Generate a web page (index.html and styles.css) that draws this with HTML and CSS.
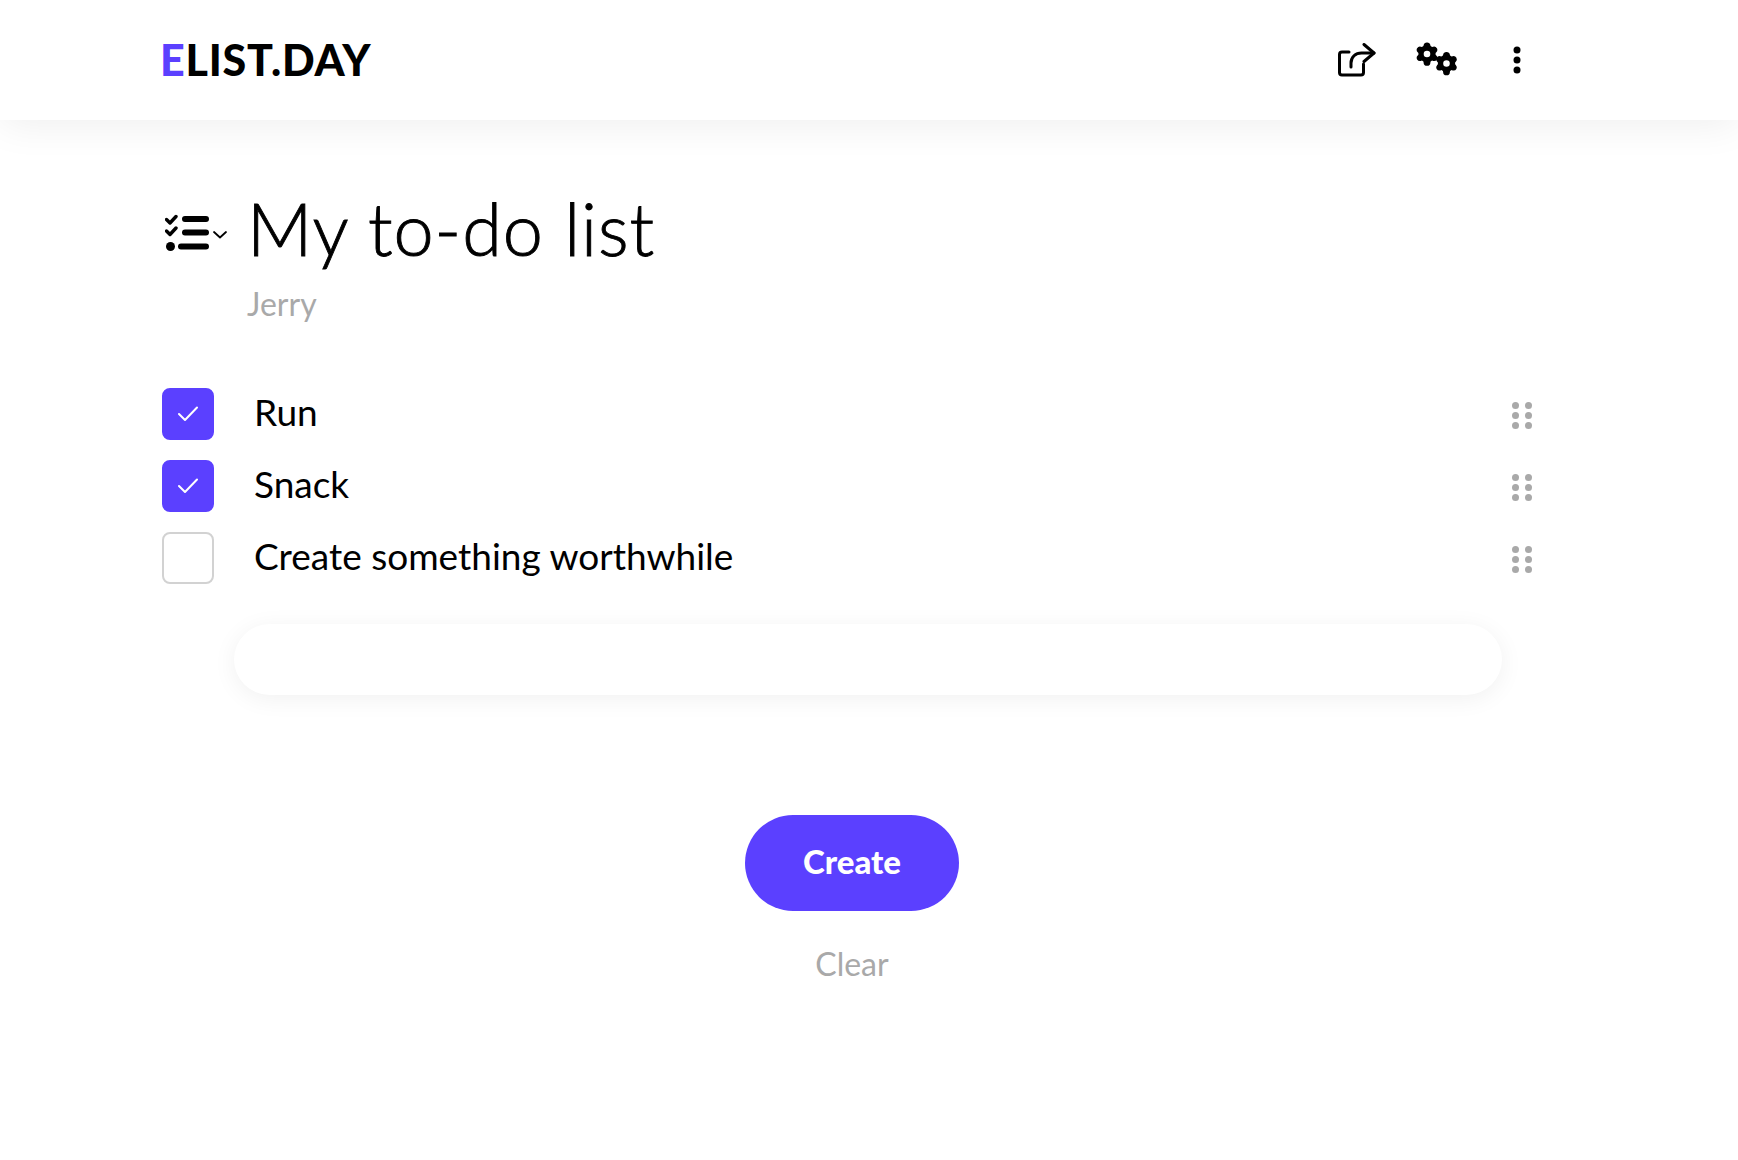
FILE: index.html
```html
<!DOCTYPE html>
<html lang="en">
<head>
<meta charset="utf-8">
<title>Elist.day</title>
<link rel="stylesheet" href="styles.css">
</head>
<body>
<header class="topbar">
  <div class="logo"><span class="logo-e">E</span>LIST.DAY</div>
  <nav class="actions">
    <svg class="icon-share" viewBox="0 0 38 34" width="38" height="34" fill="none" stroke="#000" stroke-width="3" stroke-linecap="round" stroke-linejoin="round">
      <path d="M11 9H4a2.500 2.500 0 0 0-2.500 2.500v18A2.500 2.500 0 0 0 4 32h19a2.500 2.500 0 0 0 2.500-2.500V21"/>
      <path d="M13 24v-4c0-6 4.500-10 10.500-10H36"/>
      <path d="M26 1.500L36 10l-10 8.500"/>
    </svg>
    <svg class="icon-gears" viewBox="0 0 42 34" width="42" height="34">
      <path fill-rule="evenodd" d="M11 0.500a3.400 3.400 0 0 1 3.400 2.700 l.2 .9 1.500 .9 1-.3 a3.400 3.400 0 0 1 3.800 1.500 3.400 3.400 0 0 1-.6 4 l-.7 .7 v1.800 l.7 .7 a3.400 3.400 0 0 1 .6 4 3.400 3.400 0 0 1-3.800 1.500 l-1-.3-1.500 .9-.2 .9 a3.400 3.400 0 0 1-6.800 0 l-.2-.9-1.500-.9-1 .3 a3.400 3.400 0 0 1-3.800-1.500 3.400 3.400 0 0 1 .6-4 l.7-.7 v-1.800 l-.7-.7 a3.400 3.400 0 0 1-.6-4 3.400 3.400 0 0 1 3.800-1.500 l1 .3 1.500-.9 .2-.9 a3.400 3.400 0 0 1 3.400-2.700z M11 8.700a3.300 3.300 0 1 0 0 6.600 3.300 3.300 0 0 0 0-6.600z"/>
      <path fill-rule="evenodd" d="M30.500 10a3.400 3.400 0 0 1 3.400 2.700 l.2 .9 1.500 .9 1-.3 a3.400 3.400 0 0 1 3.800 1.500 3.400 3.400 0 0 1-.6 4 l-.7 .7 v1.800 l.7 .7 a3.400 3.400 0 0 1 .6 4 3.400 3.400 0 0 1-3.800 1.500 l-1-.3-1.500 .9-.2 .9 a3.400 3.400 0 0 1-6.800 0 l-.2-.9-1.500-.9-1 .3 a3.400 3.400 0 0 1-3.800-1.500 3.400 3.400 0 0 1 .6-4 l.7-.7 v-1.800 l-.7-.7 a3.400 3.400 0 0 1-.6-4 3.400 3.400 0 0 1 3.800-1.500 l1 .3 1.500-.9 .2-.9 a3.400 3.400 0 0 1 3.400-2.700z M30.500 18.200a3.300 3.300 0 1 0 0 6.600 3.300 3.300 0 0 0 0-6.600z"/>
    </svg>
    <svg class="icon-more" viewBox="0 0 8 28" width="8" height="28" fill="#000">
      <circle cx="4" cy="4" r="3.500"/><circle cx="4" cy="14" r="3.500"/><circle cx="4" cy="24" r="3.500"/>
    </svg>
  </nav>
</header>

<main class="page">
  <section class="title-block">
    <div class="title-row">
      <svg class="icon-list" viewBox="0 0 66 38" width="66" height="38" fill="none" stroke="#000" stroke-linecap="round" stroke-linejoin="round">
        <path d="M1.500 5.500l3.500 3.500 6-6.500M1.500 17l3.500 3.500 6-6.500" stroke-width="3.400"/>
        <circle cx="5.500" cy="32.500" r="4.500" fill="#000" stroke="none"/>
        <path d="M20 5h21M20 18.500h21M16 32.500h25" stroke-width="6"/>
        <path d="M49 18l6 5.500 6-5.500" stroke-width="1.800"/>
      </svg>
      <h1 class="title">My to-do list</h1>
    </div>
    <p class="author">Jerry</p>
  </section>

  <ul class="todo-list">
    <li class="todo">
      <span class="check check-on"><svg viewBox="0 0 20 16" width="20" height="16" fill="none" stroke="#fff" stroke-width="2" stroke-linecap="round" stroke-linejoin="round"><path d="M1 8l6 6L19 1.500"/></svg></span>
      <span class="todo-text">Run</span>
      <span class="grip"><i></i><i></i><i></i><i></i><i></i><i></i></span>
    </li>
    <li class="todo">
      <span class="check check-on"><svg viewBox="0 0 20 16" width="20" height="16" fill="none" stroke="#fff" stroke-width="2" stroke-linecap="round" stroke-linejoin="round"><path d="M1 8l6 6L19 1.500"/></svg></span>
      <span class="todo-text">Snack</span>
      <span class="grip"><i></i><i></i><i></i><i></i><i></i><i></i></span>
    </li>
    <li class="todo">
      <span class="check"></span>
      <span class="todo-text">Create something worthwhile</span>
      <span class="grip"><i></i><i></i><i></i><i></i><i></i><i></i></span>
    </li>
  </ul>

  <div class="new-item"></div>

  <div class="buttons">
    <button class="create">Create</button>
    <span class="clear">Clear</span>
  </div>
</main>
</body>
</html>
```
FILE: styles.css
```css
* { box-sizing: border-box; }
html, body { margin: 0; height: 100%; }
body {
  background: #fff;
  color: #000;
  font-family: "Lato", "Noto Sans", sans-serif;
  overflow: hidden;
}
.topbar {
  height: 120px;
  display: flex;
  align-items: center;
  justify-content: space-between;
  padding: 0 217px 0 160px;
  box-shadow: 0 4px 40px rgba(0, 0, 0, 0.07);
  background: #fff;
}
.logo {
  font-size: 43px;
  font-weight: 900;
  line-height: 1;
  letter-spacing: 0.8px;
  margin-top: -2px;
}
.logo-e { color: #5b40ff; }
.actions { display: flex; align-items: center; }
.icon-share { margin-right: 40px; }
.icon-gears { margin-right: 55px; margin-top: -2px; }
.page { padding: 0 206px 0 162px; }
.title-block { padding-top: 62px; }
.title-row { display: flex; align-items: center; height: 92px; }
.icon-list { margin: 10px 16px 0 3px; flex: none; }
.title {
  margin: 0;
  font-size: 72px;
  font-weight: 300;
  line-height: 92px;
  letter-spacing: 0.9px;
  -webkit-text-stroke: 0.9px #000;
}
.author {
  margin: 10px 0 0 85px;
  font-size: 32px;
  line-height: 40px;
  color: #a9a9a9;
}
.todo-list {
  list-style: none;
  margin: 64px 0 0;
  padding: 0;
  display: flex;
  flex-direction: column;
  gap: 20px;
}
.todo { display: flex; align-items: center; height: 52px; }
.check {
  width: 52px;
  height: 52px;
  flex: none;
  display: flex;
  align-items: center;
  justify-content: center;
  border: 2px solid #d2d2d2;
  border-radius: 8px;
}
.check-on { background: #5b40ff; border-color: #5b40ff; }
.todo-text {
  flex: 1;
  margin-left: 40px;
  font-size: 37px;
  line-height: 44px;
  margin-top: -4px;
}
.grip {
  width: 20px;
  margin-top: 3px;
  display: grid;
  grid-template-columns: 7px 7px;
  justify-content: space-between;
  row-gap: 3px;
}
.grip i {
  width: 7px;
  height: 7px;
  border-radius: 50%;
  background: #a9a9a9;
}
.new-item {
  width: 1268px;
  height: 71px;
  margin: 40px 0 0 72px;
  border-radius: 36px;
  background: #fff;
  box-shadow: 0 4px 24px rgba(0, 0, 0, 0.06);
}
.buttons {
  margin: 120px 0 0 583px;
  width: 214px;
  display: flex;
  flex-direction: column;
  align-items: center;
}
.create {
  width: 214px;
  height: 96px;
  padding: 0 0 4px;
  border: 0;
  border-radius: 48px;
  background: #5b40ff;
  color: #fff;
  font-family: inherit;
  font-size: 33px;
  font-weight: 900;
}
.clear {
  margin-top: 33px;
  font-size: 32px;
  line-height: 40px;
  font-weight: 400;
  color: #a9a9a9;
}
```
